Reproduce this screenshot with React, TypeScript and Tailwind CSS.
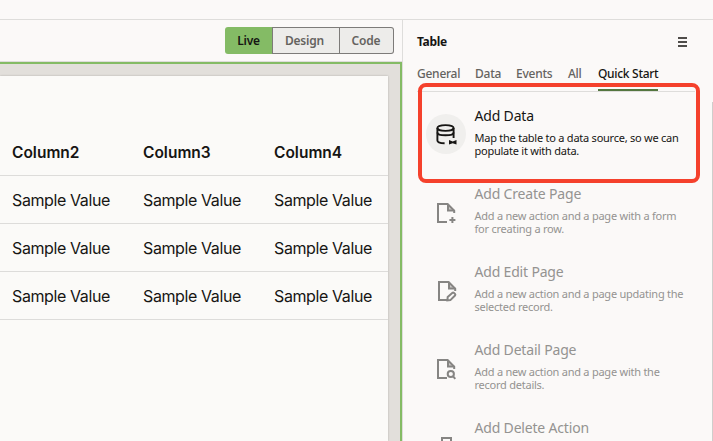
import type { ReactNode } from "react";

const DatabaseIcon = () => (
  <svg width="22" height="22" viewBox="0 0 22 22" fill="none" stroke="#161513" strokeWidth="1.9" className="translate-x-px translate-y-px">
    <ellipse cx="9.5" cy="4" rx="8.1" ry="2.9" />
    <path d="M1.4 4v12.5c0 1.6 3 2.7 7.2 2.7M17.6 4v10" />
    <path d="M1.4 8.4c0 1.7 3.4 2.9 8.1 2.9s8.1-1.2 8.1-2.9" />
    <path d="M13 16l3.7 1.4L20.5 16v4.6l-3.8-1.4L13 20.6z" fill="#161513" stroke="none" />
  </svg>
);

const FileShape = ({ children, shift = 0 }: { children: ReactNode; shift?: number }) => (
  <svg width="22" height="22" viewBox="0 0 22 22" fill="none" stroke="#868583" strokeWidth="2">
    <g transform={`translate(${shift} 0)`}>
      <path d="M11 19H2V1h9.6l6.6 6.6v2.4" />
      <path d="M12 1.4v6.2h6.2" />
      <path d="M12 1v6.6h6.6z" fill="#868583" fillOpacity=".4" stroke="none" />
      {children}
    </g>
  </svg>
);

const CreateIcon = () => (
  <FileShape>
    <path d="M16.4 14v6M13.4 17h6" />
  </FileShape>
);

const EditIcon = () => (
  <FileShape shift={1}>
    <path d="M10.4 19.3l.3-3.3 4.8-4.2c.8-.6 1.8.3 2.5 1.1.5.6.5 1.1 0 1.6l-4.6 4.6z" />
  </FileShape>
);

const DetailIcon = () => (
  <FileShape>
    <circle cx="14.8" cy="15" r="3.1" />
    <path d="M16.9 17.2l2.4 2.7" />
  </FileShape>
);

const TrashIcon = () => (
  <svg width="22" height="22" viewBox="0 0 22 22" fill="none" stroke="#868583" strokeWidth="2">
    <path d="M6 6V1h9v5M1 6.8h19M3.5 7v13h14V7" />
  </svg>
);

const items = [
  { title: "Add Data", text: "Map the table to a data source, so we can\npopulate it with data.", icon: <DatabaseIcon />, active: true },
  { title: "Add Create Page", text: "Add a new action and a page with a form\nfor creating a row.", icon: <CreateIcon /> },
  { title: "Add Edit Page", text: "Add a new action and a page updating the\nselected record.", icon: <EditIcon /> },
  { title: "Add Detail Page", text: "Add a new action and a page with the\nrecord details.", icon: <DetailIcon /> },
  { title: "Add Delete Action", text: "", icon: <TrashIcon /> },
];

const columns = ["Column2", "Column3", "Column4"];

function Canvas() {
  return (
    <div className="flex min-h-0 flex-1 flex-col border-t-2 border-r-2 border-[#84bb65] bg-[#e2dfdb] pt-3 pr-3">
      <div className="flex-1 bg-[#fbfaf8] shadow-[0_0_2px_rgba(0,0,0,0.22)]">
        <div className="h-[53px]" />
        <div className="font-['Inter',sans-serif] text-[16px] text-[#161513]">
          <div className="flex h-[47px] border-b border-[#dddcda] pl-3 text-[15.5px] leading-[48px] font-semibold">
            {columns.map((c) => (
              <div key={c} className="w-[131px] shrink-0">{c}</div>
            ))}
          </div>
          {[0, 1, 2].map((r) => (
            <div key={r} className="flex h-12 border-b border-[#dddcda] pl-3 leading-[49px] tracking-[-0.39px]">
              {columns.map((c) => (
                <div key={c} className="w-[131px] shrink-0">Sample Value</div>
              ))}
            </div>
          ))}
        </div>
      </div>
    </div>
  );
}

export default function App() {
  return (
    <div className="relative flex h-[441px] w-[713px] flex-col overflow-hidden bg-[#fbf9f8] font-['Noto_Sans',sans-serif] text-[#161513]">
      <div className="h-5 shrink-0 border-b border-[#dedddb]" />
      <div className="flex min-h-0 flex-1">
        <main className="flex w-[402px] shrink-0 flex-col">
          <div className="flex h-[42px] shrink-0 justify-end border-b border-[#dedddb] pt-[7px] pr-2">
            <div className="flex h-[27px] text-[12px] leading-[26px] font-semibold tracking-[-0.2px]">
              <div className="w-[47px] rounded-l-[3px] bg-[#84bb65] text-center leading-7">Live</div>
              <div className="w-[68px] border border-[#7d7b79] bg-[#edecea] pr-[3px] text-center text-[#65635f]">Design</div>
              <div className="w-[54px] rounded-r-[3px] border border-l-0 border-[#7d7b79] bg-[#edecea] pr-px text-center text-[#65635f]">Code</div>
            </div>
          </div>
          <Canvas />
        </main>
        <aside className="flex min-w-0 flex-1 flex-col border-l border-[#dedddb] pl-[14px]">
          <div className="flex h-[42px] shrink-0 items-center justify-between pt-px pr-[26px]">
            <h1 className="pt-px text-[12px] font-bold tracking-[-0.35px]">Table</h1>
            <svg width="9" height="10" viewBox="0 0 9 10" fill="#4f4d4a">
              <path d="M0 0h9v2H0zM0 4h9v2H0zM0 8h9v2H0z" />
            </svg>
          </div>
          <nav className="mr-[18px] flex h-[30px] shrink-0 border-b border-[#dedddb] text-[12px] leading-6 font-medium tracking-[-0.25px] whitespace-nowrap text-[#65635f]">
            <span className="w-[58px]">General</span>
            <span className="w-[41px]">Data</span>
            <span className="w-[52px]">Events</span>
            <span className="w-[30px]">All</span>
            <span className="h-[29px] w-[60px] border-b-2 border-[#54763f] tracking-[-0.3px] text-[#161513]">Quick Start</span>
          </nav>
          <div className="ml-[9px] pt-[14px]">
            {items.map((item) => (
              <section key={item.title} className={item.active ? "flex h-[78px]" : "flex h-[78px] text-[#949391]"}>
                <div className={item.active ? "mt-2 flex h-10 w-10 shrink-0 items-center justify-center rounded-full bg-[#f0efed]" : "mt-[19px] ml-[10px] h-[22px] w-[30px] shrink-0"}>
                  {item.icon}
                </div>
                <div className="ml-[8.5px] whitespace-nowrap">
                  <h2 className="text-[14px] leading-5 tracking-[-0.18px]">{item.title}</h2>
                  <p className="mt-[5px] text-[11px] leading-[13px] tracking-[-0.24px] whitespace-pre">{item.text}</p>
                </div>
              </section>
            ))}
          </div>
        </aside>
      </div>
      <div className="absolute top-[83px] left-[418px] h-[100px] w-[282px] rounded-[8px] border-4 border-[#f5412c]" />
      <div className="absolute top-[102px] right-0 h-[339px] w-px bg-[#cfcecc]" />
    </div>
  );
}
